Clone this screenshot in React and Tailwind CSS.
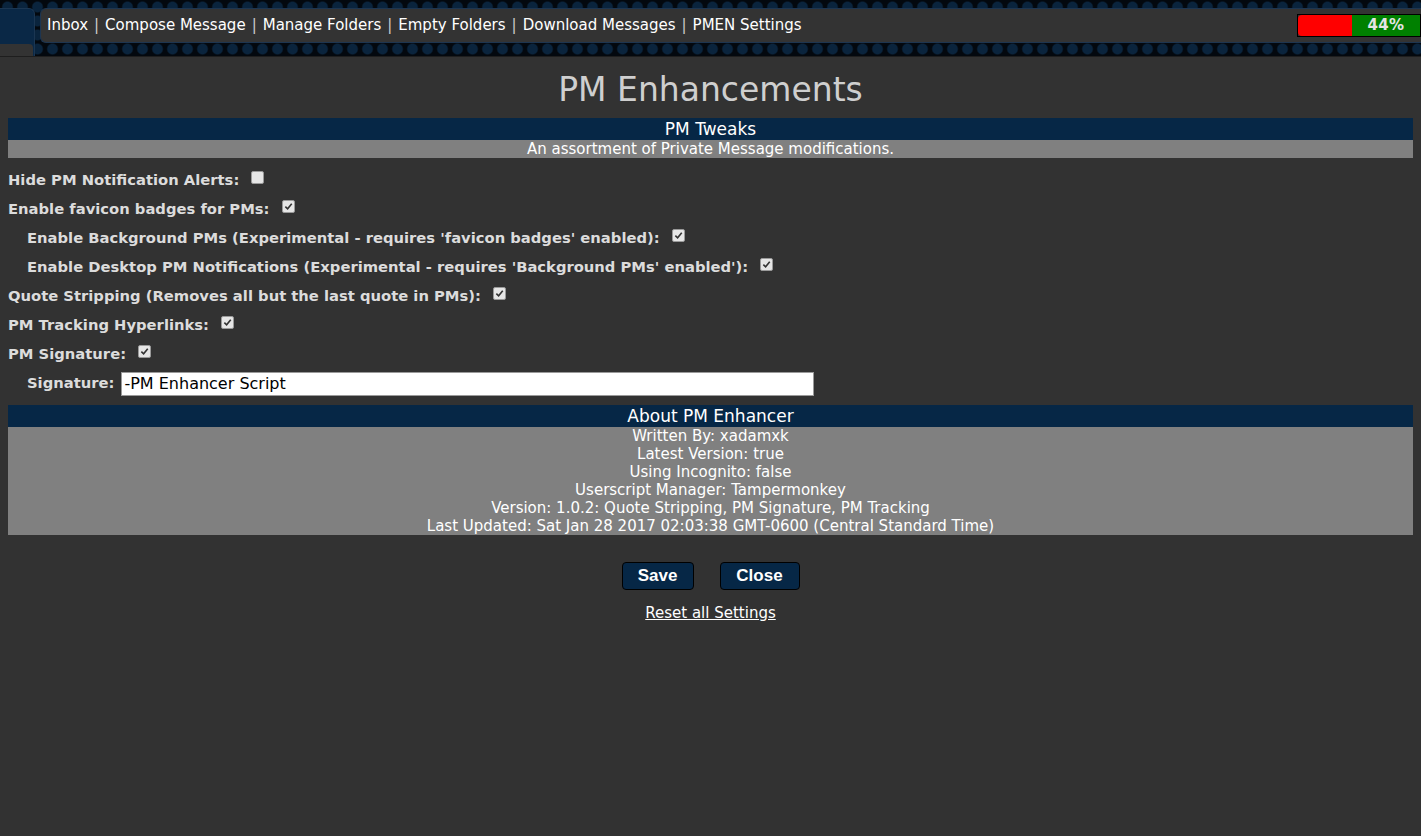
import React, { useState } from "react";

const font = { fontFamily: "'DejaVu Sans', Verdana, sans-serif" };

const navLinks = ["Inbox", "Compose Message", "Manage Folders", "Empty Folders", "Download Messages", "PMEN Settings"];

const Check = ({ checked, onChange }) => (
  <button
    type="button"
    onClick={onChange}
    className="ml-[12px] -mt-[6px] h-[13px] w-[13px] rounded-[2px] border border-[#9a9a9a] bg-[#e6e6e6] flex items-center justify-center shrink-0"
  >
    {checked && (
      <svg viewBox="0 0 10 10" className="h-[9px] w-[9px]">
        <path d="M1.5 5.2 L4 7.6 L8.6 2" fill="none" stroke="#333" strokeWidth="1.8" />
      </svg>
    )}
  </button>
);

const Option = ({ label, indent, checked, onChange }) => (
  <div className={"h-[29px] flex items-center font-bold text-[14.75px] text-[#dcdcdc] " + (indent ? "pl-[19px]" : "")}>
    <span>{label}</span>
    <Check checked={checked} onChange={onChange} />
  </div>
);

export default function App() {
  const [opts, setOpts] = useState({
    hide: false,
    favicon: true,
    background: true,
    desktop: true,
    quote: true,
    tracking: true,
    signature: true,
  });
  const [sig, setSig] = useState("-PM Enhancer Script");
  const toggle = (k) => setOpts((o) => ({ ...o, [k]: !o[k] }));

  return (
    <div className="min-h-[836px] bg-[#323232] text-white" style={font}>
      {/* top bar */}
      <div
        className="h-[57px] border-b border-[#1e1e1e] flex items-start pt-[8px]"
        style={{
          backgroundColor: "#03080e",
          backgroundImage: "radial-gradient(circle, #0a243d 45%, transparent 60%)",
          backgroundSize: "15px 14px",
        }}
      >
        <div className="w-[35px] h-[48px] bg-[#0a2846] rounded-tr-[6px] border-r border-t border-[#1b3652] flex flex-col justify-end">
          <div className="h-[12px] bg-[#333] rounded-tr-[4px] mr-[1px]" />
        </div>
        <div className="ml-[5px] flex-1 h-[35px] bg-[#333] rounded-l-[6px] border border-r-0 border-[#1d3550] flex items-center justify-between">
          <div className="pl-[6px] text-[15px] text-white flex items-center">
            {navLinks.map((l, i) => (
              <React.Fragment key={l}>
                {i > 0 && <span className="px-[6px] text-[#ccc]">|</span>}
                <a href="#" className="text-white">{l}</a>
              </React.Fragment>
            ))}
          </div>
          <div className="w-[124px] h-[23px] border border-black flex">
            <div className="w-[54px] bg-[#ff0000] rounded-l-[4px]" />
            <div className="flex-1 bg-[#008000] flex items-center justify-center font-bold text-[15px] text-[#e4e4e4] tracking-wide">44%</div>
          </div>
        </div>
      </div>

      <div className="px-[8px]">
        <h1 className="text-center text-[33px] text-[#cfcfcf] leading-none pt-[16px] pb-[12px]">PM Enhancements</h1>

        <div className="bg-[#062746] text-center text-[17px] h-[22px] leading-[22px]">PM Tweaks</div>
        <div className="bg-[#808080] text-center text-[15px] h-[18px] leading-[18px]">An assortment of Private Message modifications.</div>

        <div className="pt-[8px]">
          <Option label="Hide PM Notification Alerts:" checked={opts.hide} onChange={() => toggle("hide")} />
          <Option label="Enable favicon badges for PMs:" checked={opts.favicon} onChange={() => toggle("favicon")} />
          <Option indent label="Enable Background PMs (Experimental - requires 'favicon badges' enabled):" checked={opts.background} onChange={() => toggle("background")} />
          <Option indent label="Enable Desktop PM Notifications (Experimental - requires 'Background PMs' enabled'):" checked={opts.desktop} onChange={() => toggle("desktop")} />
          <Option label="Quote Stripping (Removes all but the last quote in PMs):" checked={opts.quote} onChange={() => toggle("quote")} />
          <Option label="PM Tracking Hyperlinks:" checked={opts.tracking} onChange={() => toggle("tracking")} />
          <Option label="PM Signature:" checked={opts.signature} onChange={() => toggle("signature")} />
          <div className="h-[29px] flex items-center pl-[19px] font-bold text-[14.75px] text-[#dcdcdc]">
            <span>Signature:</span>
            <input
              value={sig}
              onChange={(e) => setSig(e.target.value)}
              className="ml-[7px] w-[693px] h-[24px] bg-white border border-[#9a9a9a] px-[2px] text-[16px] font-normal text-black outline-none"
              style={font}
            />
          </div>
        </div>

        <div className="mt-[7px] bg-[#062746] text-center text-[17px] h-[22px] leading-[22px]">About PM Enhancer</div>
        <div className="bg-[#808080] text-center text-[15px] leading-[18px]">
          <div>Written By: xadamxk</div>
          <div>Latest Version: true</div>
          <div>Using Incognito: false</div>
          <div>Userscript Manager: Tampermonkey</div>
          <div>Version: 1.0.2: Quote Stripping, PM Signature, PM Tracking</div>
          <div>Last Updated: Sat Jan 28 2017 02:03:38 GMT-0600 (Central Standard Time)</div>
        </div>

        <div className="flex justify-center gap-[26px] mt-[27px]">
          <button className="w-[72px] h-[28px] bg-[#062746] border border-black rounded-[4px] text-[17px] font-bold text-white" style={{ fontFamily: "'Liberation Sans', Arial, sans-serif" }}>Save</button>
          <button className="w-[80px] h-[28px] bg-[#062746] border border-black rounded-[4px] text-[17px] font-bold text-white" style={{ fontFamily: "'Liberation Sans', Arial, sans-serif" }}>Close</button>
        </div>
        <div className="text-center mt-[11px]">
          <a href="#" className="text-[15px] text-white underline">Reset all Settings</a>
        </div>
      </div>
    </div>
  );
}
